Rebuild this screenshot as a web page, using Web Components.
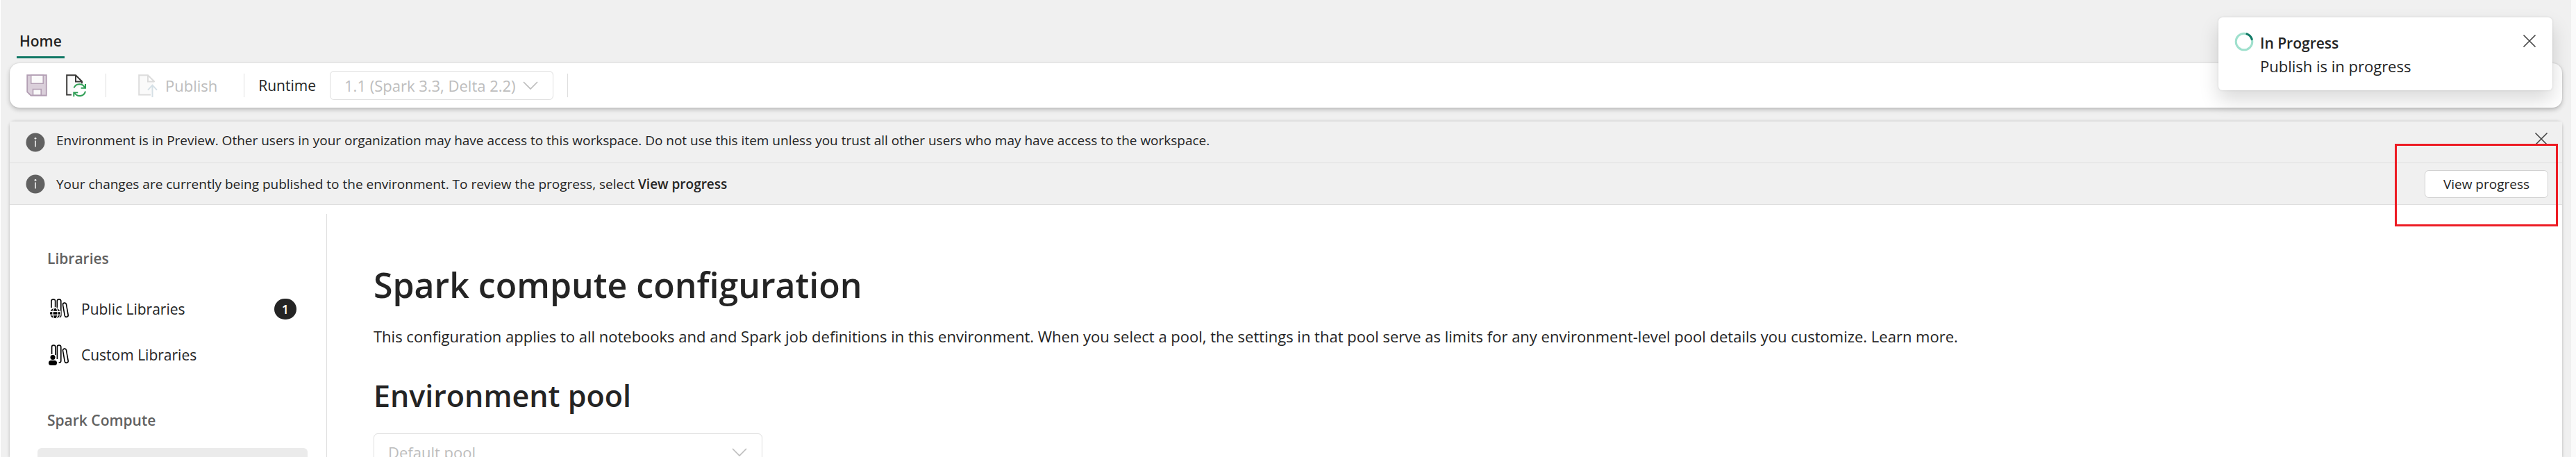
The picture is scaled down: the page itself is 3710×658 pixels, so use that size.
<!DOCTYPE html>
<html lang="en">
<head>
<meta charset="utf-8">
<title>Environment</title>
<style>
  html, body { margin: 0; height: 100%; }
  body {
    --ink: #242424;
    --muted: #616161;
    --disabled: #bdbdbd;
    --line: #dedede;
    --brand: #117865;
    --canvas: #f0f0f0;
    overflow: hidden;
    background: var(--canvas);
    color: var(--ink);
    font: 400 22px/30px "Open Sans", "Noto Sans", sans-serif;
  }
</style>
</head>
<body>
<env-app></env-app>

<script>
const define = (name, html, setup) => {
  const template = document.createElement('template');
  template.innerHTML = '<style>*{box-sizing:border-box}svg{display:block;flex:none}:host{box-sizing:border-box}</style>' + html;
  customElements.define(name, class extends HTMLElement {
    constructor() {
      super();
      this.attachShadow({ mode: 'open' }).append(template.content.cloneNode(true));
    }
    connectedCallback() { if (setup) setup(this, this.shadowRoot); }
  });
};

const icons = {
  save: ['0 0 30 32', 30, 32, `<path d="M1.2 1.2h27.6v29.3H6.5L1.2 25.3z" fill="#dacfda" stroke="#b39fb4" stroke-width="1.8"/><path d="M6.8 1.2h17.4v12H6.8z" fill="#fafafa" stroke="#b39fb4" stroke-width="1.4"/><path d="M9.5 30V21.5h11.7V30z" fill="#fafafa" stroke="#b39fb4" stroke-width="1.6"/>`],
  refresh: ['0 0 30 33', 30, 33, `<path d="M8 29.6H1.2V1.2H14l9 9v3M14 1.2v9.2h9" fill="#fafafa" stroke="#3b3a39" stroke-width="2"/><path d="M11.5 19.5a8.5 8.5 0 0 1 15.5-.6M28 14v5.8h-6.4M28 24.5a8.5 8.5 0 0 1-15.6 2.3M11.3 32v-5.8h6" fill="none" stroke="#2f9e55" stroke-width="2"/>`],
  publish: ['0 0 30 33', 30, 33, `<path d="M18 29.6H1.2V1.2H14l9 9v1M14 1.2v9.2h9" fill="#fafafa" stroke="#dcdcdc" stroke-width="2"/><path d="M20.5 33V16M14 22.6l6.5-7 6.5 7" fill="none" stroke="#d5e0e6" stroke-width="2"/>`],
  chevron: ['0 0 22 12', 22, 12, `<path d="M1 1l10 10L21 1" fill="none" stroke="currentColor" stroke-width="1.6"/>`],
  close: ['0 0 20 20', 20, 20, `<path d="M1.5 1.5l17 17M18.5 1.5l-17 17" fill="none" stroke="currentColor" stroke-width="1.6"/>`],
  info: ['0 0 28 28', 28, 28, `<circle cx="14" cy="14" r="13.5" fill="#616161"/><circle cx="14" cy="8.3" r="1.4" fill="#f0f0f0"/><path d="M14 11.6v9" stroke="#f0f0f0" stroke-width="1.6"/>`],
  globe: ['0 0 28 30', 28, 30, `<g fill="none" stroke="#000" stroke-width="1.6"><path d="M2 13V3.5Q2 1 4.8 1T7.6 3.5V13M10.3 13V3.5Q10.3 1 13 1T15.8 3.5V24Q15.8 26.2 13.5 26.6"/><rect x="19.8" y="6" width="5" height="20.5" rx="2.5" transform="rotate(-10 22.3 16)"/></g><circle cx="7.5" cy="21" r="8.6" fill="#fff"/><circle cx="7.5" cy="21" r="7.5" fill="#000"/><g fill="none" stroke="#fff" stroke-width="1.3"><ellipse cx="7.5" cy="21" rx="3.6" ry="8"/><path d="M0 18.5h15M0 23.5h15"/></g>`],
  person: ['0 0 28 30', 28, 30, `<g fill="none" stroke="#000" stroke-width="1.6"><path d="M2.6 14V3.5Q2.6 1 5.2 1T7.8 3.5V15M10.4 21V3.500Q10.400 1 13 1T15.800 3.500V23.500Q15.800 26.200 12.600 26.200"/><rect x="19.8" y="6" width="5" height="20.5" rx="2.5" transform="rotate(-10 22.3 16)"/></g><circle cx="4" cy="18.5" r="3.5" fill="#000"/><rect x="-2" y="23" width="12" height="7" rx="3.5" fill="#000"/>`],
  spinner: ['0 0 28 28', 28, 28, `<circle cx="14" cy="14" r="11.8" fill="none" stroke="#9fe0cd" stroke-width="3"/><path d="M18 2.9a11.8 11.8 0 0 1 7.2 7.6" fill="none" stroke="#117865" stroke-width="3" stroke-linecap="round"/>`]
};

define('env-icon', `<style>:host{display:block;flex:none}svg{overflow:visible}</style>`, (host, root) => {
  const [box, w, h, body] = icons[host.getAttribute('name')];
  const holder = document.createElement('template');
  holder.innerHTML = `<svg viewBox="${box}" width="${w}" height="${h}" aria-hidden="true">${body}</svg>`;
  root.append(holder.content);
});

define('env-tabs', `
<style>
  :host { display: block; padding: 44px 0 7px 10px; }
  a { display: inline-block; padding: 0 4px 7px; border-bottom: 3px solid var(--brand); font-size: 21px; font-weight: 600; color: inherit; text-decoration: none; vertical-align: top; }
</style>
<nav><a href="#home"><slot></slot></a></nav>`);

define('env-select', `
<style>
  :host { display: block; position: relative; width: 322px; height: 42px; color: var(--disabled); }
  :host([size="large"]) { width: 560px; height: 54px; }
  select { appearance: none; width: 100%; height: 100%; padding: 0 50px 0 20px; border: 1px solid var(--line); border-radius: 6px; background: #fff; color: inherit; font: inherit; opacity: 1; }
  env-icon { position: absolute; right: 22px; top: 0; bottom: 0; display: flex; align-items: center; pointer-events: none; }
</style>
<select disabled><option></option></select><env-icon name="chevron"></env-icon>`, (host, root) => {
  root.querySelector('select').setAttribute('aria-label', host.getAttribute('label'));
  root.querySelector('option').textContent = host.getAttribute('value');
});

define('env-toolbar', `
<style>
  :host { display: flex; align-items: center; height: 64px; padding: 0 24px; border-radius: 14px; background: #fff; box-shadow: 0 0 2px rgba(0,0,0,.14), 0 3px 6px rgba(0,0,0,.22); }
  button { display: flex; align-items: center; gap: 9px; padding: 0; border: 0; background: none; color: inherit; font: inherit; }
  button:disabled { color: var(--disabled); }
  .refresh { margin-left: 27px; }
  .rule { width: 1px; height: 34px; background: var(--line); }
  .first { margin: 0 46px 0 27px; }
  .second { margin: 0 20px 0 38px; }
  .label { font-size: 21px; }
  env-select { margin: 0 20px; }
</style>
<button disabled aria-label="Save"><env-icon name="save"></env-icon></button>
<button class="refresh" aria-label="Refresh"><env-icon name="refresh"></env-icon></button>
<span class="rule first"></span>
<button disabled><env-icon name="publish"></env-icon>Publish</button>
<span class="rule second"></span>
<span class="label">Runtime</span>
<env-select label="Runtime" value="1.1 (Spark 3.3, Delta 2.2)"></env-select>
<span class="rule"></span>`);

define('env-banner', `
<style>
  :host { display: flex; align-items: center; position: relative; min-height: 60px; padding: 0 20px 0 23px; border-bottom: 1px solid var(--line); background: var(--canvas); font-size: 19px; line-height: 26px; }
  :host([dismissible]) p { padding-bottom: 5px; }
  p { flex: 1; margin: 0 0 0 16px; }
  ::slotted(env-close) { align-self: flex-start; margin-top: 15px; }
</style>
<env-icon name="info"></env-icon><p><slot></slot></p><slot name="action"></slot>`);

define('env-close', `
<style>
  :host { display: block; }
  button { display: block; padding: 0; border: 0; background: none; color: #424242; }
</style>
<button aria-label="Close"><env-icon name="close"></env-icon></button>`);

define('env-button', `
<style>
  :host { display: block; }
  button { height: 40px; width: 178px; padding: 0; border: 1px solid #d1d1d1; border-radius: 6px; background: #fff; color: inherit; font: inherit; }
</style>
<button><slot></slot></button>`);

define('env-highlight', `
<style>
  :host { position: absolute; top: -28px; right: 6px; width: 235px; height: 119px; border: 3px solid #ed1c24; pointer-events: none; z-index: 2; }
</style>`);

define('env-badge', `
<style>
  :host { display: flex; align-items: center; justify-content: center; width: 32px; height: 30px; border-radius: 15px; background: var(--ink); color: #fff; font-size: 18px; font-weight: 600; line-height: 24px; }
</style><slot></slot>`);

define('env-sidebar', `
<style>
  :host { display: block; padding: 49px 27px 0 40px; border-right: 1px solid var(--line); font-size: 21px; }
  h2 { margin: 0 0 25px; padding: 0 14px; font: inherit; font-weight: 600; color: var(--muted); }
  section + section { margin-top: 46px; }
  a { display: flex; align-items: center; gap: 17px; height: 66px; padding: 0 16px 0 18px; border-radius: 6px; color: inherit; text-decoration: none; }
  a span { flex: 1; }
  .selected { background: #ebebeb; }
</style>
<section><h2>Libraries</h2>
  <a href="#public"><env-icon name="globe"></env-icon><span>Public Libraries</span><env-badge>1</env-badge></a>
  <a href="#custom"><env-icon name="person"></env-icon><span>Custom Libraries</span></a>
</section>
<section><h2>Spark Compute</h2>
  <a class="selected" href="#compute" aria-label="Compute"></a>
</section>`);

define('env-content', `
<style>
  :host { display: block; padding: 69px 67px 0; }
  h1, h2, p { margin: 0; }
  h1 { font-size: 50px; line-height: 66px; font-weight: 600; }
  p { margin-top: 26px; }
  h2 { margin: 41px 0 24px; font-size: 43px; line-height: 60px; font-weight: 600; }
</style>
<h1>Spark compute configuration</h1>
<p>This configuration applies to all notebooks and and Spark job definitions in this environment. When you select a pool, the settings in that pool serve as limits for any environment-level pool details you customize. Learn more.</p>
<h2>Environment pool</h2>
<env-select size="large" label="Environment pool" value="Default pool"></env-select>`);

define('env-toast', `
<style>
  :host { position: absolute; top: 25px; right: 27px; z-index: 3; display: flex; align-items: flex-start; width: 481px; min-height: 105px; padding: 21px 23px 18px; border-radius: 6px; background: #fff; box-shadow: 0 0 3px rgba(0,0,0,.12), 0 14px 28px rgba(0,0,0,.15); line-height: 33px; }
  div { flex: 1; margin-left: 9px; }
  p { margin: 0; }
  .title { font-size: 21px; font-weight: 600; }
  env-close { margin-top: 3px; }
</style>
<env-icon name="spinner"></env-icon>
<div role="status"><p class="title">In Progress</p><p>Publish is in progress</p></div>
<env-close></env-close>`);

define('env-app', `
<style>
  :host { display: flex; flex-direction: column; position: relative; height: 100vh; overflow: hidden; padding: 0 13px; border-left: 1px solid #fff; border-right: 7px solid #fafafa; }
  main { flex: 1; min-height: 0; margin-top: 19px; border-top: 1px solid var(--line); border-radius: 8px 8px 0 0; background: #fff; box-shadow: 0 1px 4px rgba(0,0,0,.25); }
  .body { display: grid; grid-template-columns: 457px 1fr; height: 100%; margin-top: 13px; }
  b { font-weight: 600; }
</style>
<env-tabs>Home</env-tabs>
<env-toolbar></env-toolbar>
<main>
  <env-banner dismissible>Environment is in Preview. Other users in your organization may have access to this workspace. Do not use this item unless you trust all other users who may have access to the workspace.<env-close slot="action"></env-close></env-banner>
  <env-banner>Your changes are currently being published to the environment. To review the progress, select <b>View progress</b><env-button slot="action">View progress</env-button><env-highlight slot="action"></env-highlight></env-banner>
  <div class="body"><env-sidebar></env-sidebar><env-content></env-content></div>
</main>
<env-toast></env-toast>`);
</script>
</body>
</html>
